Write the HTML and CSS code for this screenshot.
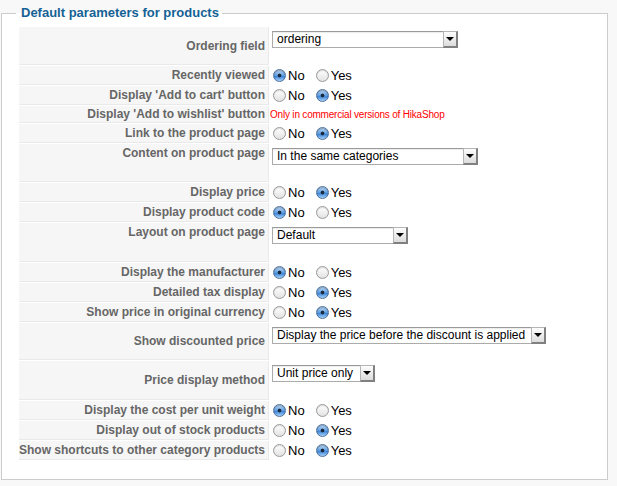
FILE: index.html
```html
<!DOCTYPE html>
<html lang="en">
<head>
<meta charset="utf-8">
<title>Default parameters for products</title>
<link rel="stylesheet" href="styles.css">
</head>
<body>
<div class="page">
<fieldset class="params">
<legend>Default parameters for products</legend>
<table class="admintable">
<tr class="tall">
<td class="key mid">Ordering field</td>
<td class="val"><div class="selcell"><span class="sel w186"><select><option>ordering</option></select><span class="arrow"></span></span></div></td>
</tr>
<tr>
<td class="key">Recently viewed</td>
<td class="val"><div class="opts"><label class="opt"><input type="radio" class="rad" name="rv" checked>No</label><label class="opt"><input type="radio" class="rad" name="rv">Yes</label></div></td>
</tr>
<tr>
<td class="key">Display 'Add to cart' button</td>
<td class="val"><div class="opts"><label class="opt"><input type="radio" class="rad" name="ac">No</label><label class="opt"><input type="radio" class="rad" name="ac" checked>Yes</label></div></td>
</tr>
<tr class="short">
<td class="key">Display 'Add to wishlist' button</td>
<td class="val"><span class="note">Only in commercial versions of HikaShop</span></td>
</tr>
<tr>
<td class="key">Link to the product page</td>
<td class="val"><div class="opts"><label class="opt"><input type="radio" class="rad" name="lp">No</label><label class="opt"><input type="radio" class="rad" name="lp" checked>Yes</label></div></td>
</tr>
<tr class="tall">
<td class="key top">Content on product page</td>
<td class="val"><div class="selcell"><span class="sel w206"><select><option>In the same categories</option></select><span class="arrow"></span></span></div></td>
</tr>
<tr>
<td class="key">Display price</td>
<td class="val"><div class="opts"><label class="opt"><input type="radio" class="rad" name="dp">No</label><label class="opt"><input type="radio" class="rad" name="dp" checked>Yes</label></div></td>
</tr>
<tr>
<td class="key">Display product code</td>
<td class="val"><div class="opts"><label class="opt"><input type="radio" class="rad" name="pc" checked>No</label><label class="opt"><input type="radio" class="rad" name="pc">Yes</label></div></td>
</tr>
<tr class="tall">
<td class="key top">Layout on product page</td>
<td class="val"><div class="selcell h35"><span class="sel w136"><select><option>Default</option></select><span class="arrow"></span></span></div></td>
</tr>
<tr>
<td class="key">Display the manufacturer</td>
<td class="val"><div class="opts"><label class="opt"><input type="radio" class="rad" name="dm" checked>No</label><label class="opt"><input type="radio" class="rad" name="dm">Yes</label></div></td>
</tr>
<tr>
<td class="key">Detailed tax display</td>
<td class="val"><div class="opts"><label class="opt"><input type="radio" class="rad" name="td">No</label><label class="opt"><input type="radio" class="rad" name="td" checked>Yes</label></div></td>
</tr>
<tr>
<td class="key">Show price in original currency</td>
<td class="val"><div class="opts"><label class="opt"><input type="radio" class="rad" name="oc">No</label><label class="opt"><input type="radio" class="rad" name="oc" checked>Yes</label></div></td>
</tr>
<tr class="tall">
<td class="key mid">Show discounted price</td>
<td class="val"><div class="selcell h33"><span class="sel w274"><select><option>Display the price before the discount is applied</option></select><span class="arrow"></span></span></div></td>
</tr>
<tr class="tall">
<td class="key mid">Price display method</td>
<td class="val"><div class="selcell h35"><span class="sel w103"><select><option>Unit price only</option></select><span class="arrow"></span></span></div></td>
</tr>
<tr>
<td class="key">Display the cost per unit weight</td>
<td class="val"><div class="opts"><label class="opt"><input type="radio" class="rad" name="cw" checked>No</label><label class="opt"><input type="radio" class="rad" name="cw">Yes</label></div></td>
</tr>
<tr>
<td class="key">Display out of stock products</td>
<td class="val"><div class="opts"><label class="opt"><input type="radio" class="rad" name="os">No</label><label class="opt"><input type="radio" class="rad" name="os" checked>Yes</label></div></td>
</tr>
<tr>
<td class="key">Show shortcuts to other category products</td>
<td class="val"><div class="opts"><label class="opt"><input type="radio" class="rad" name="sc">No</label><label class="opt"><input type="radio" class="rad" name="sc" checked>Yes</label></div></td>
</tr>
</table>
</fieldset>
</div>
</body>
</html>
```

FILE: styles.css
```css
html, body {
  margin: 0;
  padding: 0;
  background: #f8f8f8;
  font-family: "Liberation Sans", Arial, Helvetica, sans-serif;
  font-size: 12px;
  color: #000;
}

.page {
  padding: 5px 9px 0 1px;
}

.params {
  margin: 0;
  padding: 5px 10px 17px 16px;
  border: 1px solid #cccccc;
  background: #ffffff;
  height: 475px;
  box-sizing: border-box;
}

.params legend {
  margin-left: -2px;
  padding: 0 3px 0 5px;
  font-size: 13px;
  line-height: 16px;
  font-weight: bold;
  color: #146295;
}

.admintable {
  border-collapse: separate;
  border-spacing: 1px;
}

.admintable td {
  padding: 2px 0 2px 2px;
  line-height: 14px;
}

.admintable td.key {
  width: 246px;
  padding: 2px 3px 2px 0;
  background: #f6f6f6;
  border-bottom: 1px solid #e9e9e9;
  border-right: 1px solid #e9e9e9;
  text-align: right;
  font-weight: bold;
  color: #666666;
  white-space: nowrap;
  vertical-align: middle;
}

.admintable td.key.top {
  vertical-align: top;
}

.admintable td.val {
  vertical-align: middle;
}

.admintable tr.tall td.val {
  vertical-align: top;
}

.admintable tr.short td {
  line-height: 12px;
}

.opts {
  display: flex;
  align-items: center;
  height: 14px;
}

.opt {
  display: inline-flex;
  align-items: center;
  margin-right: 10px;
  font-size: 13px;
  color: #000;
}

.rad {
  -webkit-appearance: none;
  appearance: none;
  box-sizing: border-box;
  width: 13px;
  height: 13px;
  margin: 0 2px 0 1px;
  border-radius: 50%;
  border: 1px solid #9a9a9a;
  background: linear-gradient(#ffffff, #e2e2e2);
  box-shadow: inset 0 1px 1px rgba(0, 0, 0, 0.15);
}

.rad:checked {
  border-color: #50729c;
  background:
    radial-gradient(circle, #1c2a3c 0 1.6px, transparent 2.2px),
    linear-gradient(#c3dcf6, #5f9ee2 50%, #3f86d6 60%, #a7d2fa);
  box-shadow: inset 0 1px 1px rgba(0, 0, 0, 0.25);
}

.note {
  margin-left: -2px;
  color: #ff0000;
  font-size: 10px;
  letter-spacing: -0.2px;
}

.selcell {
  height: 34px;
}

.selcell.h33 {
  height: 33px;
}

.selcell.h35 {
  height: 35px;
}

.sel {
  position: relative;
  display: inline-block;
  height: 17px;
  margin-top: 2px;
  vertical-align: top;
}

.w186 { width: 186px; }
.w206 { width: 206px; }
.w136 { width: 136px; }
.w274 { width: 274px; }
.w103 { width: 103px; }

.sel select {
  -webkit-appearance: none;
  appearance: none;
  display: block;
  box-sizing: border-box;
  width: 100%;
  height: 17px;
  margin: 0;
  padding: 0 16px 0 4px;
  border: 1px solid #ababab;
  border-top-color: #9a9a9a;
  border-radius: 0;
  background: #ffffff;
  font-family: "Liberation Sans", Arial, Helvetica, sans-serif;
  font-size: 12px;
  line-height: 15px;
  color: #000;
  box-shadow: inset 0 1px 1px rgba(0, 0, 0, 0.08);
}

.sel .arrow {
  position: absolute;
  top: 0;
  right: 0;
  width: 12px;
  height: 14px;
  border-top: 1px solid #b5b5b5;
  border-left: 1px solid #b5b5b5;
  border-right: 2px solid #808080;
  border-bottom: 2px solid #808080;
  background: linear-gradient(#fdfdfd, #dcdcdc);
  pointer-events: none;
}

.sel .arrow::after {
  content: "";
  position: absolute;
  left: 2px;
  top: 5px;
  border-left: 4px solid transparent;
  border-right: 4px solid transparent;
  border-top: 4px solid #000;
}
```
